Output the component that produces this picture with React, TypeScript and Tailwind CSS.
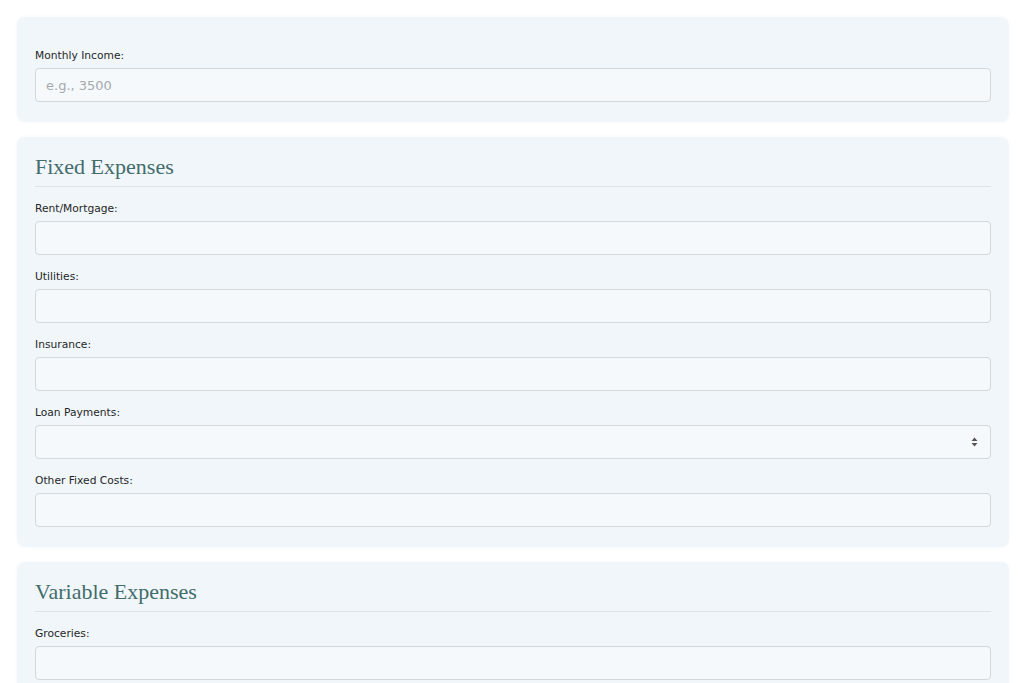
import type { JSX } from 'react';

const labelFont = { fontFamily: '"DejaVu Sans", Verdana, sans-serif' };

function Field({ label, placeholder, spinner, last }: { label: string; placeholder?: string; spinner?: boolean; last?: boolean }): JSX.Element {
  return (
    <div className={last ? '' : 'mb-[14px]'}>
      <label className="block text-[10.7px] leading-[16px] text-[#262626] mb-[4px]" style={labelFont}>
        {label}
      </label>
      <div className="relative">
        <input
          type="text"
          placeholder={placeholder}
          className="block w-full h-[34px] rounded-[4px] border border-[#d2d7db] bg-[#f5f9fc] px-[10px] text-[13px] text-[#333] placeholder:text-[#a4a9ad] outline-none"
          style={labelFont}
        />
        {spinner && (
          <svg className="absolute right-[13px] top-[12px]" width="7" height="10" viewBox="0 0 7 10">
            <path d="M3.5 0.5 L6.5 4 L0.5 4 Z" fill="#555" />
            <path d="M0.5 6 L6.5 6 L3.5 9.5 Z" fill="#555" />
          </svg>
        )}
      </div>
    </div>
  );
}

function Section({ title, children }: { title?: string; children: React.ReactNode }): JSX.Element {
  return (
    <div
      className={`rounded-[8px] bg-[#f0f6fa] px-[18px] pb-[20px] shadow-[0_0_4px_rgba(0,0,0,0.03)] ${title ? 'pt-[17px]' : 'pt-[31px]'}`}
    >
      {title && (
        <h2
          className="text-[22px] leading-[26px] text-[#436c6b] pb-[6px] border-b border-[#dae4ea] mb-[14px]"
          style={{ fontFamily: '"Liberation Serif", Georgia, serif' }}
        >
          {title}
        </h2>
      )}
      {children}
    </div>
  );
}

export default function App(): JSX.Element {
  return (
    <div className="min-h-screen bg-white pt-[17px] pl-[17px] pr-[15px]">
      <div className="flex flex-col gap-[15px]">
        <Section>
          <Field label="Monthly Income:" placeholder="e.g., 3500" last />
        </Section>
        <Section title="Fixed Expenses">
          <Field label="Rent/Mortgage:" />
          <Field label="Utilities:" />
          <Field label="Insurance:" />
          <Field label="Loan Payments:" spinner />
          <Field label="Other Fixed Costs:" last />
        </Section>
        <Section title="Variable Expenses">
          <Field label="Groceries:" last />
        </Section>
      </div>
    </div>
  );
}
